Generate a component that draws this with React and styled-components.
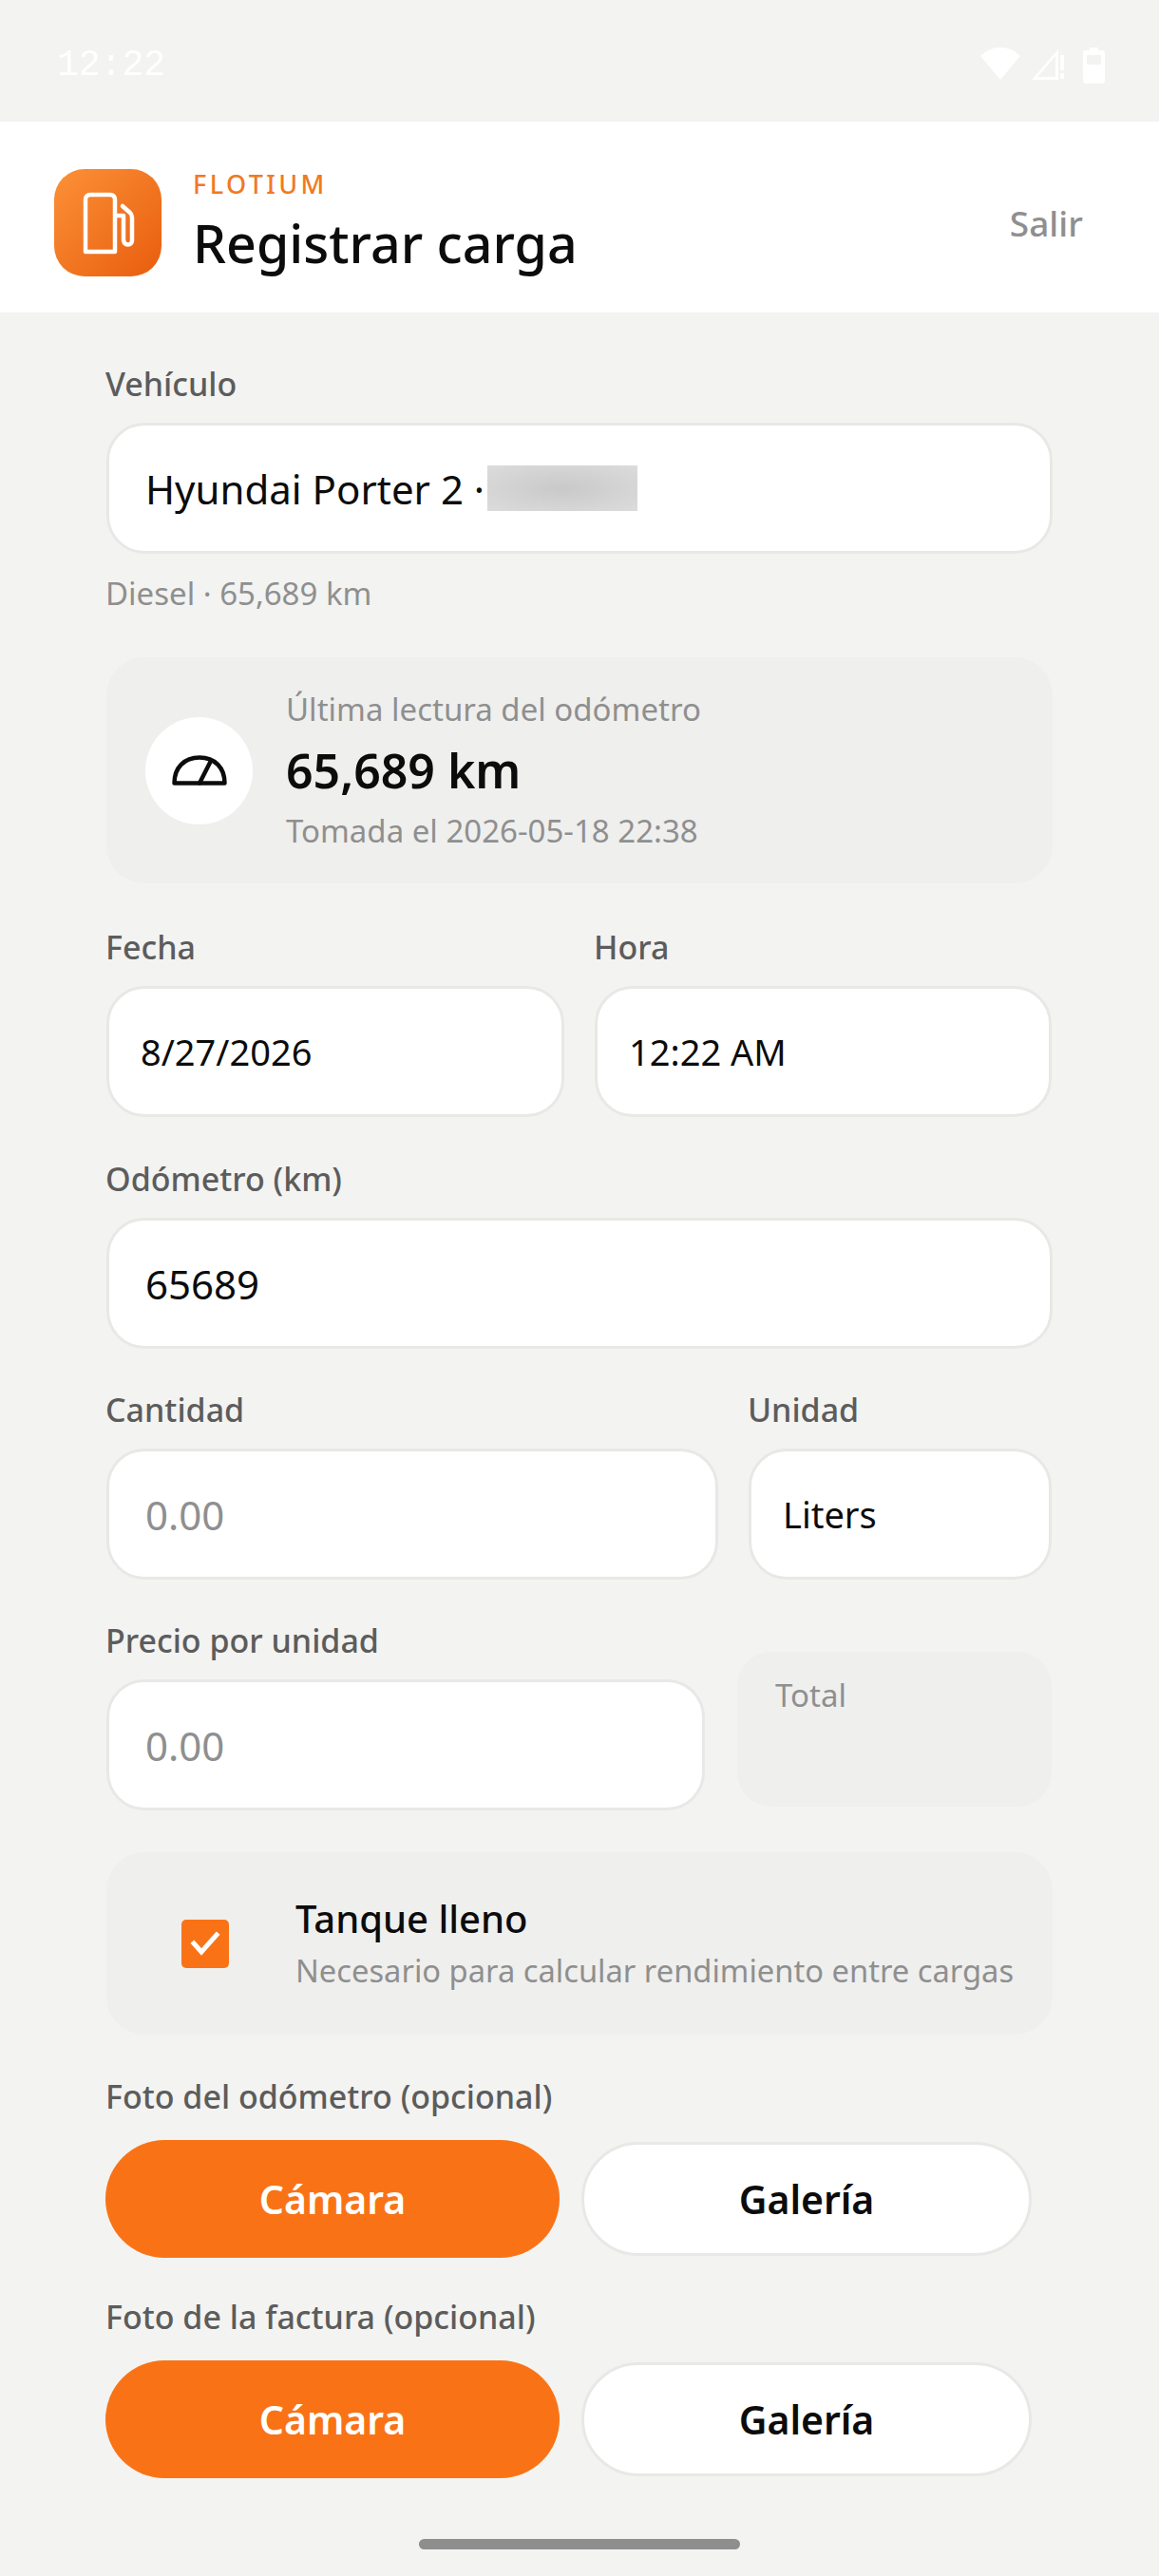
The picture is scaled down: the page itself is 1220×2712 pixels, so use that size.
import React from "react";
import styled, { createGlobalStyle } from "styled-components";

const GlobalStyle = createGlobalStyle`
  html, body {
    margin: 0;
    padding: 0;
    background: #f3f3f1;
    font-family: "Noto Sans", "Open Sans", sans-serif;
  }
  * { box-sizing: border-box; }
`;

const FuelIcon = () => (
  <svg width="113" height="113" viewBox="0 0 113 113" fill="none" stroke="#fff" strokeWidth="4.5" strokeLinejoin="round" strokeLinecap="round">
    <path d="M33 87V32c0-3 2-5 5-5h21c3 0 5 2 5 5v55z" />
    <path d="M65 49h8" />
    <path d="M72 39l8 7c1 1 2 3 2 5v24c0 6-8 6-9 0V50" />
  </svg>
);

const GaugeIcon = () => (
  <svg width="58" height="32" viewBox="0 0 58 32" fill="none" stroke="#0c0c0c" strokeWidth="4.500" strokeLinejoin="round" strokeLinecap="round">
    <path d="M2.500 29.500C2.500 13 13 2.500 29 2.500s26.500 10.500 26.500 27z" />
    <path d="M29 29.500L41 6" />
  </svg>
);

const CheckIcon = () => (
  <svg width="36" height="28" viewBox="0 0 36 28" fill="none" stroke="#fff" strokeWidth="5" strokeLinecap="square">
    <path d="M6 14l8 9L30 5" />
  </svg>
);

const WifiIcon = () => (
  <svg width="42" height="34" viewBox="0 0 42 34" fill="#fff">
    <path d="M21 34L0 9C6 3 13 0 21 0s15 3 21 9z" />
  </svg>
);

const SignalIcon = () => (
  <svg width="42" height="36" viewBox="0 0 42 36" fill="#fff">
    <path d="M0 34L28 2v32zM6 31h19V9z" fillRule="evenodd" />
    <path d="M30 8h4v16h-4zM30 27h4v6h-4z" />
  </svg>
);

const BatteryIcon = () => (
  <svg width="23" height="38" viewBox="0 0 23 38" fill="#fff">
    <path d="M7 0h9v3h4c2 0 3 1 3 3v29c0 2-1 3-3 3H3c-2 0-3-1-3-3V6c0-2 1-3 3-3h4zM4 8v10h15V8z" fillRule="evenodd" />
  </svg>
);

const App = () => {
  return (
    <Page>
      <GlobalStyle />
      <StatusBar>
        <StatusTime>12:22</StatusTime>
        <StatusIcons>
          <WifiIcon />
          <SignalIcon />
          <BatteryIcon />
        </StatusIcons>
      </StatusBar>

      <Header>
        <LogoTile>
          <FuelIcon />
        </LogoTile>
        <HeaderText>
          <Brand>FLOTIUM</Brand>
          <Title>Registrar carga</Title>
        </HeaderText>
        <Logout>Salir</Logout>
      </Header>

      <Form>
        <Field>
          <Label>Vehículo</Label>
          <Input>
            <span>Hyundai Porter 2 ·</span>
            <Redacted />
          </Input>
          <Hint>Diesel · 65,689 km</Hint>
        </Field>

        <OdometerCard>
          <IconCircle>
            <GaugeIcon />
          </IconCircle>
          <div>
            <CardCaption>Última lectura del odómetro</CardCaption>
            <CardValue>65,689 km</CardValue>
            <CardCaption>Tomada el 2026-05-18 22:38</CardCaption>
          </div>
        </OdometerCard>

        <Row $columns="482px 481px" $gap="32px" $top="45px">
          <Field>
            <Label>Fecha</Label>
            <Input $small>8/27/2026</Input>
          </Field>
          <Field>
            <Label>Hora</Label>
            <Input $small>12:22 AM</Input>
          </Field>
        </Row>

        <Row $columns="1fr" $top="43px">
          <Field>
            <Label>Odómetro (km)</Label>
            <Input>65689</Input>
          </Field>
        </Row>

        <Row $columns="644px 319px" $gap="32px" $top="42px">
          <Field>
            <Label>Cantidad</Label>
            <Input $muted>0.00</Input>
          </Field>
          <Field>
            <Label>Unidad</Label>
            <Input $small>Liters</Input>
          </Field>
        </Row>

        <Row $columns="630px 331px" $gap="34px" $top="42px">
          <Field>
            <Label>Precio por unidad</Label>
            <Input $muted>0.00</Input>
          </Field>
          <TotalBox>Total</TotalBox>
        </Row>

        <TankCard>
          <CheckBox>
            <CheckIcon />
          </CheckBox>
          <div>
            <TankTitle>Tanque lleno</TankTitle>
            <TankHint>Necesario para calcular rendimiento entre cargas</TankHint>
          </div>
        </TankCard>

        <PhotoGroup $top="43px">
          <Label>Foto del odómetro (opcional)</Label>
          <Buttons>
            <PrimaryButton>Cámara</PrimaryButton>
            <SecondaryButton>Galería</SecondaryButton>
          </Buttons>
        </PhotoGroup>

        <PhotoGroup $top="40px">
          <Label>Foto de la factura (opcional)</Label>
          <Buttons>
            <PrimaryButton>Cámara</PrimaryButton>
            <SecondaryButton>Galería</SecondaryButton>
          </Buttons>
        </PhotoGroup>
      </Form>

      <HomeBar />
    </Page>
  );
};

export default App;

const Page = styled.div`
  width: 1220px;
  height: 2712px;
  overflow: hidden;
  background: #f3f3f1;
  color: #0c0c0c;
`;

const StatusBar = styled.div`
  height: 128px;
  display: flex;
  align-items: flex-start;
  justify-content: space-between;
  padding: 49px 57px 0 60px;
`;

const StatusTime = styled.div`
  font-family: "Liberation Mono", monospace;
  font-size: 38px;
  line-height: 40px;
  color: #fff;
`;

const StatusIcons = styled.div`
  display: flex;
  align-items: flex-start;
  gap: 12px;
  margin-top: 1px;
`;

const Header = styled.header`
  height: 201px;
  background: #fff;
  display: flex;
  align-items: center;
  padding: 12px 80px 0 57px;
`;

const LogoTile = styled.div`
  width: 113px;
  height: 113px;
  border-radius: 32px;
  background: linear-gradient(135deg, #fc9138, #e85d0e);
  margin-right: 33px;
  flex: none;
`;

const HeaderText = styled.div`
  flex: 1;
`;

const Brand = styled.div`
  font-size: 27px;
  line-height: 34px;
  font-weight: 500;
  letter-spacing: 3.4px;
  color: #f07a22;
`;

const Title = styled.h1`
  margin: 9px 0 0;
  font-size: 55.500px;
  line-height: 72px;
  font-weight: 500;
  color: #0c0c0c;
`;

const Logout = styled.div`
  font-size: 37px;
  font-weight: 500;
  color: #8f8f8f;
`;

const Form = styled.main`
  padding: 53px 112px 0;
`;

const Field = styled.div`
  min-width: 0;
`;

const Label = styled.div`
  height: 44px;
  margin: 0 0 19px -1px;
  font-size: 34px;
  line-height: 44px;
  font-weight: 500;
  white-space: nowrap;
  color: #5c5c5c;
`;

const Input = styled.div`
  height: 138px;
  display: flex;
  align-items: center;
  gap: 3px;
  padding-left: ${(p) => (p.$small ? "33px" : "38px")};
  background: #fff;
  border: 3px solid #e8e8e6;
  border-radius: 40px;
  font-size: ${(p) => (p.$small ? "38px" : "42px")};
  color: ${(p) => (p.$muted ? "#8f8f8f" : "#0c0c0c")};
`;

const Redacted = styled.span`
  width: 158px;
  height: 48px;
  background: radial-gradient(ellipse at 50% 50%, #c9c9c9, #dcdcdc);
`;

const Hint = styled.div`
  margin: 20px 0 0 -1px;
  font-size: 33px;
  line-height: 44px;
  color: #8f8f8f;
`;

const OdometerCard = styled.section`
  height: 238px;
  margin-top: 45px;
  display: flex;
  align-items: center;
  gap: 35px;
  padding-left: 41px;
  border-radius: 40px;
  background: #efefee;
`;

const IconCircle = styled.div`
  width: 113px;
  height: 113px;
  border-radius: 50%;
  background: #fff;
  display: flex;
  align-items: center;
  justify-content: center;
  flex: none;
`;

const CardCaption = styled.div`
  font-size: 33px;
  line-height: 44px;
  color: #8f8f8f;
`;

const CardValue = styled.div`
  font-size: 50px;
  line-height: 84px;
  font-weight: 600;
  color: #0c0c0c;
`;

const Row = styled.div`
  display: grid;
  grid-template-columns: ${(p) => p.$columns};
  column-gap: ${(p) => p.$gap || "0"};
  margin-top: ${(p) => p.$top};
`;

const TotalBox = styled.div`
  height: 163px;
  align-self: end;
  margin-bottom: 4px;
  padding: 24px 0 0 40px;
  border-radius: 36px;
  background: #efefee;
  font-size: 33px;
  line-height: 44px;
  color: #8f8f8f;
`;

const TankCard = styled.section`
  height: 192px;
  margin-top: 44px;
  display: flex;
  align-items: center;
  padding-left: 79px;
  gap: 70px;
  border-radius: 40px;
  background: #efefee;
`;

const CheckBox = styled.div`
  width: 50px;
  height: 51px;
  border-radius: 5px;
  background: #f97316;
  display: flex;
  align-items: center;
  justify-content: center;
  flex: none;
`;

const TankTitle = styled.div`
  font-size: 40px;
  line-height: 50px;
  font-weight: 500;
  color: #0c0c0c;
`;

const TankHint = styled.div`
  margin-top: 8px;
  font-size: 32.700px;
  line-height: 44px;
  white-space: nowrap;
  color: #8f8f8f;
`;

const PhotoGroup = styled.div`
  margin-top: ${(p) => p.$top};
`;

const Buttons = styled.div`
  display: flex;
  align-items: center;
  gap: 23px;
  margin: 24px 0 0 -1px;
`;

const PrimaryButton = styled.div`
  width: 478px;
  height: 124px;
  border-radius: 62px;
  background: #f97316;
  color: #fff;
  display: flex;
  align-items: center;
  justify-content: center;
  font-size: 41px;
  font-weight: 600;
`;

const SecondaryButton = styled.div`
  width: 474px;
  height: 120px;
  border-radius: 60px;
  background: #fff;
  border: 3px solid #e8e8e6;
  color: #0c0c0c;
  display: flex;
  align-items: center;
  justify-content: center;
  font-size: 41px;
  font-weight: 600;
`;

const HomeBar = styled.div`
  width: 338px;
  height: 11px;
  margin: 64px auto 0;
  border-radius: 6px;
  background: #8e8e8e;
`;
